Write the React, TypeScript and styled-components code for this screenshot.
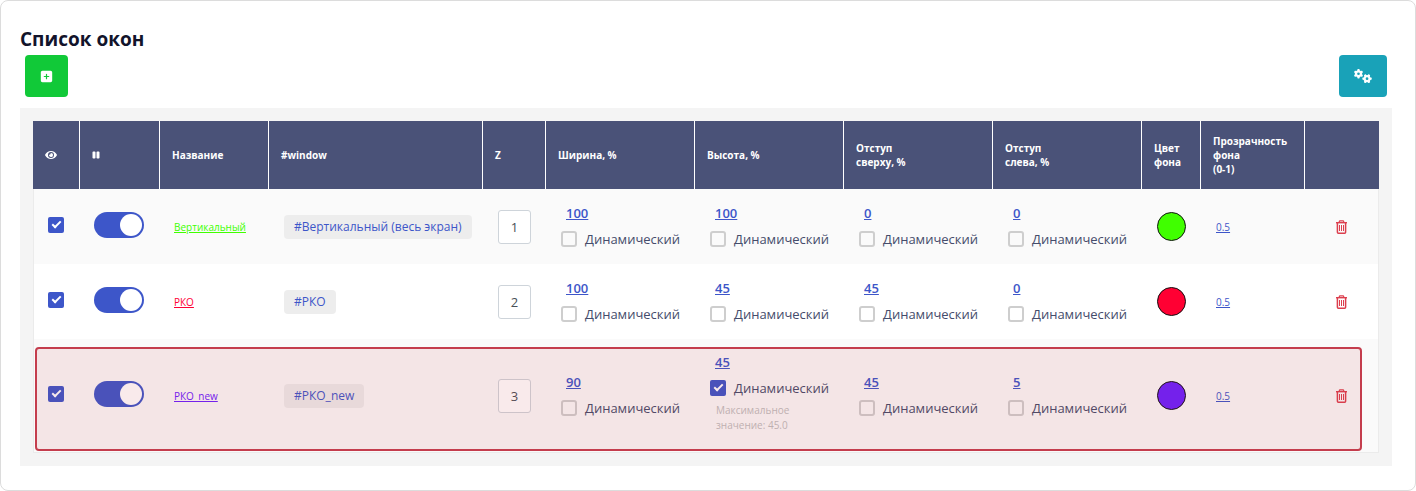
import React from "react";
import styled, { createGlobalStyle, css } from "styled-components";
import { FaEye, FaPause } from "react-icons/fa";
import { FaGears, FaSquarePlus } from "react-icons/fa6";

const GlobalStyle = createGlobalStyle`
  *, *::before, *::after { box-sizing: border-box; }
  body {
    margin: 0;
    background: #fff;
    color: #454c6b;
    font-family: "Open Sans", "Noto Sans", sans-serif;
    font-size: 13px;
    line-height: 24px;
  }
`;

const Card = styled.section`
  border: 1px solid #dcdcdc;
  border-radius: 8px;
  background: #fff;
  padding: 24px 23px 24px 19px;
`;

const Title = styled.h2`
  margin: 0;
  color: #12142b;
  font-size: 19px;
  line-height: 28px;
  font-weight: 700;
`;

const Toolbar = styled.div`
  display: flex;
  justify-content: space-between;
  padding: 2px 5px 11px;
`;

const ToolButton = styled.button<{ $tone: string }>`
  display: flex;
  align-items: center;
  justify-content: center;
  height: 42px;
  padding: 0 15px;
  border: 0;
  border-radius: 4px;
  background: ${(p) => p.$tone};
  color: #fff;
  cursor: pointer;
`;

const Panel = styled.div`
  padding: 13px;
  background: #f4f4f4;
`;

const Table = styled.table`
  width: 100%;
  table-layout: fixed;
  border-collapse: separate;
  border-spacing: 0;
`;

const HeadCell = styled.th`
  height: 68px;
  padding: 0 12px;
  border-right: 1px solid #fff;
  background: #4a5278;
  color: #fff;
  font-size: 10px;
  line-height: 14px;
  font-weight: 700;
  text-align: left;
  vertical-align: middle;

  &:last-child { border-right: 0; }
  svg { display: block; }
`;

const Cell = styled.td`
  height: 75px;
  padding: 12px 0 12px 15px;
  vertical-align: middle;

  &:first-child { border-left: 1px solid #ebebeb; padding-left: 14px; }
  &:last-child { border-right: 1px solid #ebebeb; }
`;

const LeadCell = styled(Cell)`
  padding-left: 14px;
`;

const ValueCell = styled(Cell)`
  padding-top: 11px;
  padding-bottom: 13px;
`;

const Row = styled.tr`
  position: relative;
  background: #fff;

  &:nth-child(odd) { background: #fafafa; }
  &:last-child ${Cell} { border-bottom: 1px solid #ebebeb; }
`;

const Highlight = styled.span`
  position: absolute;
  inset: 8px 17px 2px 2px;
  border: 2px solid #c43d4d;
  border-radius: 4px;
  background: rgba(200, 50, 60, 0.1);
  pointer-events: none;
`;

const Check = styled.input`
  appearance: none;
  display: block;
  flex: none;
  width: 16px;
  height: 16px;
  margin: 0;
  border: 2px solid #cecece;
  border-radius: 3px;
  background: transparent;

  &:checked {
    border: 0;
    border-radius: 2px;
    background: #3d56c9;
  }
  &:checked::after {
    content: "";
    display: block;
    width: 9px;
    height: 5px;
    margin: 4px 0 0 4px;
    border: solid #fff;
    border-width: 0 0 2px 2px;
    transform: rotate(-45deg);
  }
`;

const Lifted = styled.div`
  padding-bottom: 3px;
`;

const Toggle = styled.input`
  appearance: none;
  display: flex;
  align-items: center;
  width: 50px;
  height: 26px;
  margin: 0;
  padding: 2px;
  border-radius: 13px;
  background: #c4c4c4;

  &::after {
    content: "";
    width: 22px;
    height: 22px;
    border-radius: 50%;
    background: #fff;
  }
  &:checked {
    justify-content: flex-end;
    background: #3d56c9;
  }
`;

const Link = styled.a<{ $small?: boolean; $tone?: string }>`
  color: ${(p) => p.$tone ?? "#3d56c9"};
  text-decoration: underline;
  ${(p) => p.$small && css`font-size: 10px;`}
`;

const ValueLink = styled(Link)`
  display: table;
  margin-left: 5px;
  font-weight: 600;
`;

const Tag = styled.code`
  display: inline-block;
  padding: 0 10px;
  border-radius: 4px;
  background: #ededed;
  color: #3d56c9;
  font-family: inherit;
  font-size: 12px;
  line-height: 24px;
  white-space: nowrap;
  vertical-align: middle;
`;

const OrderInput = styled.input`
  display: block;
  width: 33px;
  height: 34px;
  padding: 0;
  border: 1px solid #ced4da;
  border-radius: 3px;
  background: #fff;
  color: #495057;
  font: inherit;
  text-align: center;
`;

const DynamicLabel = styled.label`
  display: flex;
  align-items: center;
  gap: 8px;
  margin-top: 2px;
`;

const Note = styled.p`
  margin: 3px 24px 6px 6px;
  color: #bebebe;
  font-size: 10px;
  line-height: 15px;
`;

const Swatch = styled.button<{ $tone: string }>`
  display: block;
  width: 29px;
  height: 29px;
  padding: 0;
  border: 1px solid #111;
  border-radius: 50%;
  background: ${(p) => p.$tone};
`;

const DeleteButton = styled.button`
  display: block;
  margin-left: 15px;
  padding: 0;
  border: 0;
  background: none;
  color: #dc3f4e;
  cursor: pointer;
  svg { display: block; }
`;

const TrashIcon = () => (
  <svg width="13" height="14" viewBox="0 0 13 14" fill="none" stroke="currentColor" aria-hidden="true">
    <path d="M1 2.7h11" strokeWidth="1.4" />
    <path d="M4.3 2.4V1.6c0-.5.3-.8.8-.8h2.8c.5 0 .8.3.8.8v.8" strokeWidth="1.2" />
    <path d="M2.4 3v9.2c0 .6.4 1 1 1h6.2c.6 0 1-.4 1-1V3" strokeWidth="1.5" />
    <path d="M4.5 5v6M6.5 5v6M8.5 5v6" />
  </svg>
);

type Measure = { value: string; dynamic?: boolean; note?: string };

type WindowRow = {
  name: string;
  tag: string;
  order: number;
  color: string;
  measures: Measure[];
  highlighted?: boolean;
};

const columns = [47, 80, 109, 214, 63, 149, 149, 149, 149, 59, 104, 74];
const measureNames = ["Ширина", "Высота", "Отступ сверху", "Отступ слева"];

const rows: WindowRow[] = [
  {
    name: "Вертикальный", tag: "#Вертикальный (весь экран)", order: 1, color: "#40ff00",
    measures: [{ value: "100" }, { value: "100" }, { value: "0" }, { value: "0" }],
  },
  {
    name: "РКО", tag: "#РКО", order: 2, color: "#ff0033",
    measures: [{ value: "100" }, { value: "45" }, { value: "45" }, { value: "0" }],
  },
  {
    name: "РКО_new", tag: "#РКО_new", order: 3, color: "#6b20ff", highlighted: true,
    measures: [
      { value: "90" },
      { value: "45", dynamic: true, note: "Максимальное значение: 45.0" },
      { value: "45" },
      { value: "5" },
    ],
  },
];

const MeasureCell = ({ measure }: { measure: Measure }) => (
  <ValueCell>
    <ValueLink href="#">{measure.value}</ValueLink>
    <DynamicLabel>
      <Check type="checkbox" defaultChecked={measure.dynamic} />
      Динамический
    </DynamicLabel>
    {measure.note && <Note>{measure.note}</Note>}
  </ValueCell>
);

export default function App() {
  return (
    <>
      <GlobalStyle />
      <Card>
        <Title>Список окон</Title>
        <Toolbar>
          <ToolButton type="button" $tone="#11c938" aria-label="Добавить окно">
            <FaSquarePlus size={13} />
          </ToolButton>
          <ToolButton type="button" $tone="#19a2b8" aria-label="Настройки">
            <FaGears size={18} />
          </ToolButton>
        </Toolbar>
        <Panel>
          <Table>
            <colgroup>
              {columns.map((width, i) => <col key={i} width={width} />)}
            </colgroup>
            <thead>
              <tr>
                <HeadCell aria-label="Видимость"><FaEye size={12} /></HeadCell>
                <HeadCell aria-label="Пауза"><FaPause size={8} /></HeadCell>
                <HeadCell>Название</HeadCell>
                <HeadCell>#window</HeadCell>
                <HeadCell>Z</HeadCell>
                <HeadCell>Ширина, %</HeadCell>
                <HeadCell>Высота, %</HeadCell>
                <HeadCell>Отступ<br />сверху, %</HeadCell>
                <HeadCell>Отступ<br />слева, %</HeadCell>
                <HeadCell>Цвет<br />фона</HeadCell>
                <HeadCell>Прозрачность<br />фона<br />(0-1)</HeadCell>
                <HeadCell aria-label="Действия" />
              </tr>
            </thead>
            <tbody>
              {rows.map((row) => (
                <Row key={row.order}>
                  <Cell><Lifted><Check type="checkbox" defaultChecked aria-label={`Показать ${row.name}`} /></Lifted></Cell>
                  <LeadCell><Lifted><Toggle type="checkbox" role="switch" defaultChecked aria-label={`Включить ${row.name}`} /></Lifted></LeadCell>
                  <LeadCell><Link href="#" $small $tone={row.color}>{row.name}</Link></LeadCell>
                  <Cell><Tag>{row.tag}</Tag></Cell>
                  <Cell><OrderInput type="text" defaultValue={row.order} aria-label={`Порядок ${row.name}`} /></Cell>
                  {row.measures.map((measure, i) => <MeasureCell key={measureNames[i]} measure={measure} />)}
                  <Cell><Swatch type="button" $tone={row.color} aria-label={`Цвет фона ${row.name}`} /></Cell>
                  <Cell><Link href="#" $small>0.5</Link></Cell>
                  <Cell>
                    <DeleteButton type="button" aria-label={`Удалить ${row.name}`}><TrashIcon /></DeleteButton>
                    {row.highlighted && <Highlight />}
                  </Cell>
                </Row>
              ))}
            </tbody>
          </Table>
        </Panel>
      </Card>
    </>
  );
}
